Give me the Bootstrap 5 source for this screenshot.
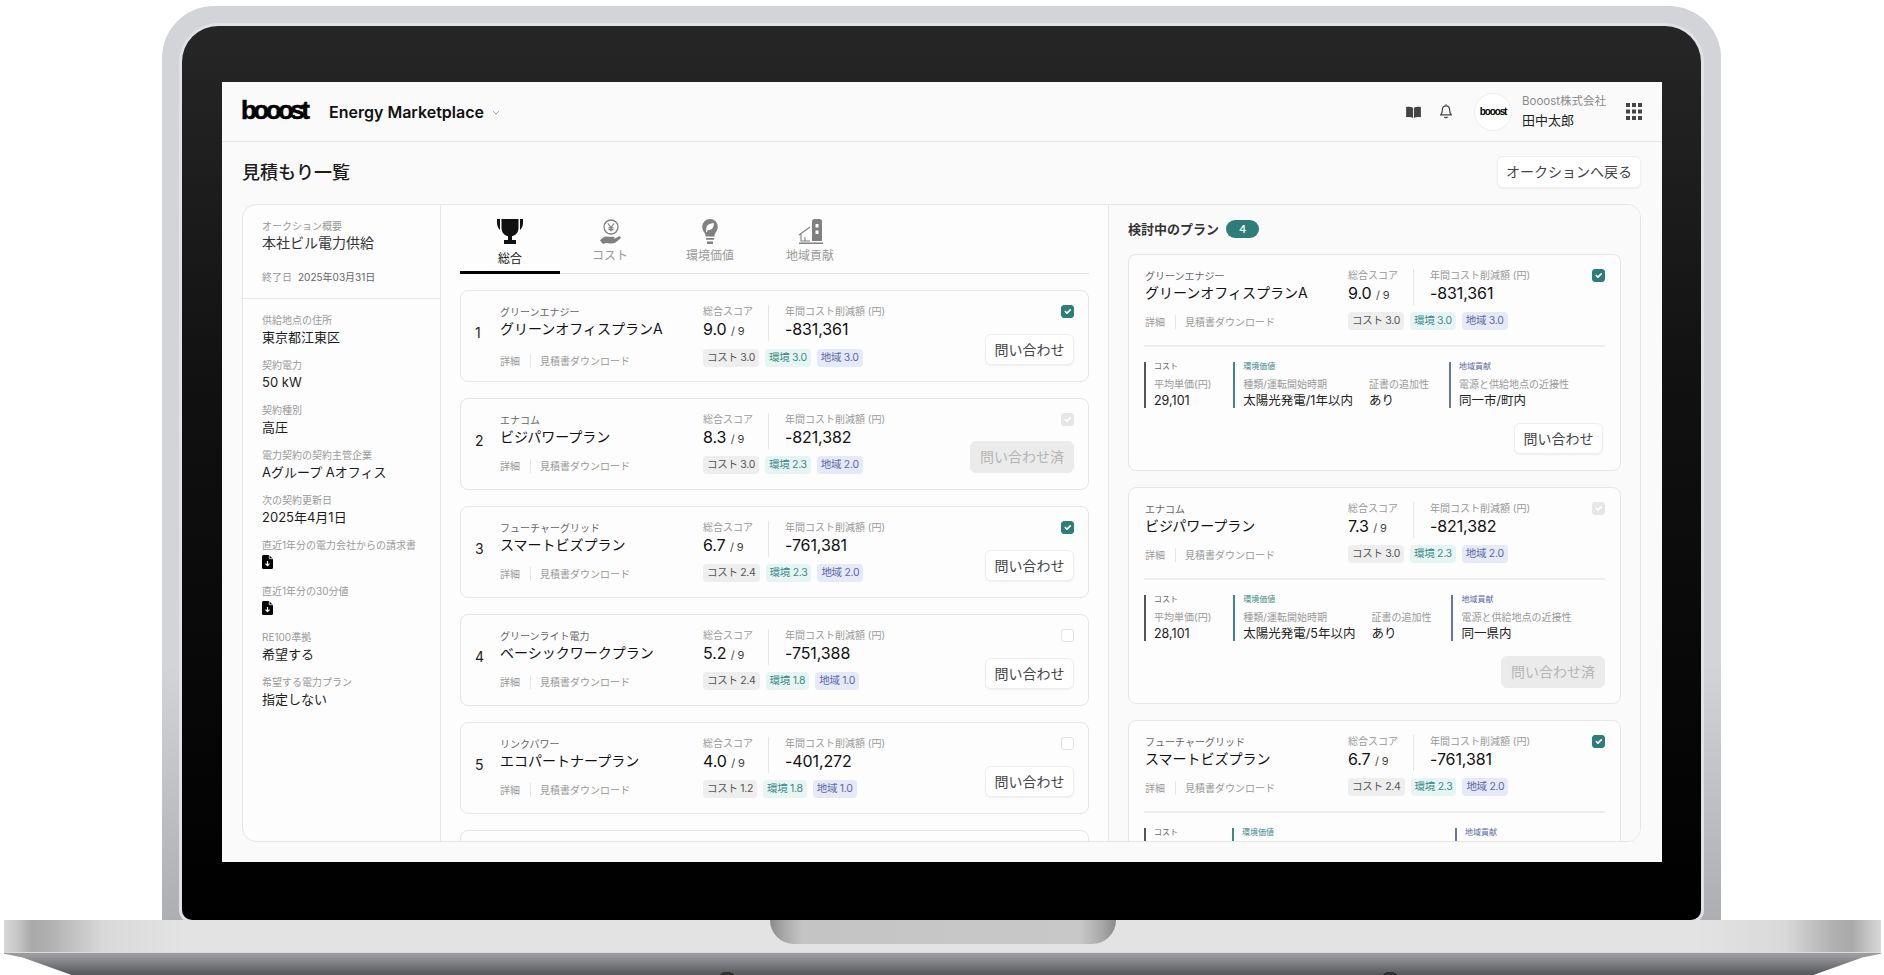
<!doctype html>
<html lang="ja">
<head>
<meta charset="utf-8">
<title>見積もり一覧</title>
<link href="https://cdn.jsdelivr.net/npm/bootstrap@5.3.0/dist/css/bootstrap.min.css" rel="stylesheet">
<style>
html,body{height:975px;overflow:hidden;background:#fff}
body{font-family:Inter,"Noto Sans CJK JP",sans-serif;color:#1c1c1c}
.lid{margin:6px 163px 0 162px;padding:20px 20px 0;height:914px;border-radius:52px 52px 0 0;background:linear-gradient(#d2d4d8 0,#d2d4d8 72%,#adaeb2 100%)}
.bezel{height:894px;padding:56px 39px 58px 40px;border-radius:36px 36px 10px 10px;background:linear-gradient(#262626 0,#111 40%,#000 100%);box-shadow:0 0 0 3px #e0e2e6}
.screen{height:780px;overflow:hidden;background:#fafafa}
.base-top{height:33px;background:linear-gradient(90deg,#d6d6d6 0,#c8c8c8 12px,#a9a9a9 28px,#b0b0b0 46px,#d9d9d9 100px,#e3e3e4 180px,#e3e3e4 1690px,#d9d9d9 1780px,#b0b0b0 1830px,#a9a9a9 1848px,#c8c8c8 1866px,#d6d6d6 100%);margin:0 3px 0 4px;border-bottom:1px solid #dcdcdc}
.notch{width:346px;height:24px;border-radius:0 0 24px 24px;background:linear-gradient(90deg,#8a8a8a 0,#a8a8a8 14px,#c4c4c4 32px,#c8c8c8 310px,#a8a8a8 332px,#8a8a8a 100%)}
.base-bottom{height:22px;margin:0 3px 0 4px;background:radial-gradient(ellipse 7px 3px at 723px 100%,#333 0 98%,transparent),radial-gradient(ellipse 7px 3px at 1386px 100%,#333 0 98%,transparent),linear-gradient(#9c9c9f 0,#98989b 15%,#6f7074 65%,#55575b 100%);clip-path:polygon(0 0,100% 0,100% 3%,99% 20%,96.400% 100%,3.600% 100%,1% 20%,0 3%)}
.top-bar{height:60px;padding:0 20px;border-bottom:1px solid #e6e6e6;background:#fafafa}
.logo-mark{font-family:"Liberation Sans",sans-serif;font-weight:700;font-size:26px;letter-spacing:-3.55px;line-height:1;color:#000;width:66px;margin:-4px 0 0 -1px;-webkit-text-stroke:.5px #000}
.app-name{font-size:16px;font-weight:600;margin-left:22px;color:#111}
.chev{margin-left:8px;margin-top:3px}
.bell-ico{margin-left:19px}
.ava{width:38px;height:38px;border-radius:50%;background:#fff;border:1px solid #eee;font-family:"Liberation Sans",sans-serif;font-weight:700;font-size:10px;letter-spacing:-1.1px;color:#000;margin-left:22px}
.who-box{margin-left:10px;width:84px}
.org{font-size:11.500px;line-height:16px;color:#8a8a8a;white-space:nowrap}
.who{font-size:13px;line-height:20px;color:#222;margin-top:1px}
.grid-ico{margin-left:20px}
.title-row{padding:14px 21px 0 20px;margin-bottom:16px}
.page-title{font-size:18px;font-weight:500;margin:2px 0 0;color:#1c1c1c}
.btn.ghost{--bs-btn-padding-x:8px;--bs-btn-padding-y:0;height:32px;font-size:14px;line-height:30px;color:#444;background:#fff;border:1px solid #eee;border-radius:6px;box-shadow:0 1px 2px rgba(0,0,0,.05)}
.btn.asked,.btn.asked:disabled{--bs-btn-padding-x:9px;height:32px;font-size:14px;line-height:30px;padding-top:0;padding-bottom:0;background:#ebebeb;color:#b5b5b5;border:1px solid #ebebeb;border-radius:6px;opacity:1}
.board{margin:0 21px 0 20px;height:638px;border:1px solid #e6e6e6;border-radius:14px;overflow:hidden;background:#fdfdfd}
.info-col{width:198px;flex:none;border-right:1px solid #e8e8e8}
.info-head{padding:14px 19px 13px;border-bottom:1px solid #e8e8e8}
.lbl{font-size:10px;line-height:14px;color:#999}
.info-title{font-size:14px;line-height:20px;color:#333}
.info-date{font-size:10px;line-height:16px;margin-top:16px;color:#999}
.info-date span{color:#666;margin-left:6px}
.info-list{padding:14px 19px}
.info-item{margin-bottom:11px}
.info-val{font-size:13px;line-height:20px;color:#1c1c1c}
.file-row{height:21px;padding-top:3px;line-height:0}
.mid-col{width:668px;flex:none;border-right:1px solid #e8e8e8;padding:0 19px;overflow:hidden}
.tabs{height:69px;border-bottom:1px solid #e3e3e3;margin-bottom:16px}
.tab-item{width:100px;height:69px;padding-top:14px;text-align:center;font-size:12px;line-height:16px;color:#9a9a9a}
.tab-item svg{display:block;margin:0 auto 4px}
.tab-item.on{color:#111;border-bottom:3px solid #000}
.tab-item.on svg{margin-bottom:7px}
.card.plan{--bs-card-bg:#fdfdfd;--bs-card-border-color:#e6e6e6;--bs-card-border-radius:8px;--bs-card-inner-border-radius:7px;margin-bottom:16px}
.mid-col .plan{height:92px;padding:14px 14px 16px;flex-direction:row}
.rank{width:25px;flex:none;font-size:14px;line-height:20px;color:#222;align-self:center;margin-top:-4px}
.plan-main{width:203px;flex:none}
.vendor{font-size:10px;line-height:14px;color:#666}
.plan-name{font-size:14px;line-height:20px;color:#111}
.plan-links{font-size:10px;line-height:14px;color:#999;margin-top:12px}
.plan-links i{display:inline-block;width:1px;height:14px;background:#e6e6e6;margin:0 9px 0 10px;vertical-align:top}
.mid-col .plan-top .plan-links{margin-top:15px}
.mid-col .plan-top .chips{margin-top:8px}
.num-a{width:66px;border-right:1px solid #e6e6e6}
.num-b{padding-left:16px}
.num-lbl{font-size:10px;line-height:12px;color:#999}
.num-val{font-size:16px;line-height:20px;margin-top:2px;color:#111;letter-spacing:-.1px}
.num-val small{font-size:11px;color:#444}
.chips{margin-top:7px;gap:6px}
.badge.chip{font-size:10.500px;font-weight:400;line-height:18px;height:18px;padding:0 4px;border-radius:4px;letter-spacing:-.3px}
.chip-c{background:#eee;color:#555}
.chip-e{background:#e6f5f3;color:#3d8a85}
.chip-r{background:#e6e9f7;color:#5b68a8}
.plan-side{margin-left:auto}
.form-check-input.pick{width:13px;height:13px;margin:0;border-radius:3px;border-color:#e3e3e3;background-color:#fff;flex:none}
.form-check-input.pick:checked{background-color:#2f7d78;border-color:#2f7d78}
.form-check-input.pick:disabled{opacity:1}
.form-check-input.pick:checked:disabled{background-color:#e6e6e6;border-color:#e6e6e6}
.btn.ask{--bs-btn-padding-x:8.500px;height:31px;padding-top:0;padding-bottom:0;font-size:14px;line-height:29px;color:#444;background:#fff;border:1px solid #eee;border-radius:6px;box-shadow:0 1px 2px rgba(0,0,0,.06)}
.side-col{flex:1;background:#fafafa;padding:14px 19px 0 19px;overflow:hidden}
.side-head{font-size:13px;line-height:20px;font-weight:600;color:#333;height:20px;margin-bottom:15px}
.badge.count{background:#2f7d78;color:#fff;font-size:11px;font-weight:500;line-height:18px;height:18px;padding:0 13px;border-radius:9px;margin-left:7px}
.side-col .plan{height:217px;padding:14px 15px 0 16px}
.plan-rule{height:2px;background:#ededed;margin:15px 0 15px -1px}
.facet{border-left:2px solid #555;padding-left:8px;height:46px}
.facet-e{border-left-color:#3d8a85}
.facet-r{border-left-color:#6673ad}
.facet-h{font-size:8px;line-height:8px;color:#666}
.facet-e .facet-h{color:#3d8a85}
.facet-r .facet-h{color:#5b68a8}
.facet-l{font-size:10px;line-height:14px;color:#999;margin-top:7px}
.facet-v{font-size:12.500px;line-height:18px;color:#222;margin-top:1px}
.facets{gap:20px;margin-left:-1px}
.facet:first-child{margin-right:2px}
.pair{gap:16px}
.cost-wide{width:56px}
.env-wide{width:193px}
.side-col .btn.ask{margin:15px 2px 0 0}
.side-col .btn.asked{margin:15px 0 0 0}
</style>
</head>
<body>
<div class="lid">
 <div class="bezel">
  <div class="screen">
   <header class="top-bar d-flex align-items-center">
    <div class="logo-mark">booost</div>
    <div class="app-name">Energy Marketplace</div>
    <svg class="chev" width="8" height="6" viewBox="0 0 8 6" fill="none" stroke="#aaa" stroke-width="1"><path d="M1 1l3 3 3-3"/></svg>
    <div class="d-flex align-items-center ms-auto">
     <svg width="15" height="12" viewBox="0 0 16 13" fill="#444"><path d="M0 1.200C2.300.500 5.500.500 7.500 1.800V13C5.500 11.800 2.300 11.600 0 12.200zM16 1.200C13.700.500 10.500.500 8.500 1.800V13C10.500 11.800 13.700 11.600 16 12.200z"/></svg>
     <svg class="bell-ico" width="12" height="15" viewBox="0 0 12 15" fill="none" stroke="#444" stroke-width="1.200"><path d="M6 1.800c-2.500 0-3.600 1.900-3.600 4 0 2.600-.7 3.900-1.600 5h10.400c-.9-1.100-1.600-2.400-1.600-5 0-2.100-1.100-4-3.600-4zM6 .3v1.500M4.500 12.700c.4 1.300 2.600 1.300 3 0"/></svg>
     <div class="ava d-flex align-items-center justify-content-center">booost</div>
     <div class="who-box">
      <div class="org">Booost株式会社</div>
      <div class="who">田中太郎</div>
     </div>
     <svg class="grid-ico" width="16" height="17" viewBox="0 0 16 17" fill="#444"><path d="M0 0h4v4H0zM6 0h4v4H6zM12 0h4v4h-4zM0 6.500h4v4H0zM6 6.500h4v4H6zM12 6.500h4v4h-4zM0 13h4v4H0zM6 13h4v4H6zM12 13h4v4h-4z"/></svg>
    </div>
   </header>
   <div class="title-row d-flex align-items-center justify-content-between">
    <h1 class="page-title">見積もり一覧</h1>
    <button type="button" class="btn ghost">オークションへ戻る</button>
   </div>
   <div class="board d-flex">
    <aside class="info-col">
     <div class="info-head">
      <div class="lbl">オークション概要</div>
      <div class="info-title">本社ビル電力供給</div>
      <div class="info-date">終了日<span>2025年03月31日</span></div>
     </div>
     <div class="info-list">
      <div class="info-item"><div class="lbl">供給地点の住所</div><div class="info-val">東京都江東区</div></div>
      <div class="info-item"><div class="lbl">契約電力</div><div class="info-val">50 kW</div></div>
      <div class="info-item"><div class="lbl">契約種別</div><div class="info-val">高圧</div></div>
      <div class="info-item"><div class="lbl">電力契約の契約主管企業</div><div class="info-val">Aグループ Aオフィス</div></div>
      <div class="info-item"><div class="lbl">次の契約更新日</div><div class="info-val">2025年4月1日</div></div>
      <div class="info-item"><div class="lbl">直近1年分の電力会社からの請求書</div><div class="file-row"><svg width="11" height="14" viewBox="0 0 11 14"><path d="M1.500 0H7l4 4v8.500A1.500 1.500 0 0 1 9.500 14h-8A1.500 1.500 0 0 1 0 12.500v-11A1.500 1.500 0 0 1 1.500 0z" fill="#000"/><path d="M5.500 6v4.500M3.500 8.700l2 2 2-2" stroke="#fff" fill="none" stroke-width="1.200"/><path d="M7.300 0v3.700H11" fill="none" stroke="#fff" stroke-width=".8"/></svg></div></div>
      <div class="info-item"><div class="lbl">直近1年分の30分値</div><div class="file-row"><svg width="11" height="14" viewBox="0 0 11 14"><path d="M1.500 0H7l4 4v8.500A1.500 1.500 0 0 1 9.500 14h-8A1.500 1.500 0 0 1 0 12.500v-11A1.500 1.500 0 0 1 1.500 0z" fill="#000"/><path d="M5.500 6v4.500M3.500 8.700l2 2 2-2" stroke="#fff" fill="none" stroke-width="1.200"/><path d="M7.300 0v3.700H11" fill="none" stroke="#fff" stroke-width=".8"/></svg></div></div>
      <div class="info-item"><div class="lbl">RE100準拠</div><div class="info-val">希望する</div></div>
      <div class="info-item"><div class="lbl">希望する電力プラン</div><div class="info-val">指定しない</div></div>
     </div>
    </aside>
    <main class="mid-col">
     <div class="tabs d-flex">
      <div class="tab-item on">
       <svg width="26" height="25" viewBox="0 0 26 25" fill="#111"><path d="M0 0h3v11C1 9 0 6.500 0 4zM26 0h-3v11c2-2 3-4.500 3-7zM4.500 0h17v9c0 4.500-3 7.500-6.500 8.200V21h4v4H7v-4h4v-3.800C7.500 16.500 4.500 13.500 4.500 9z"/></svg>
       総合
      </div>
      <div class="tab-item">
       <svg width="26" height="25" viewBox="0 0 26 25"><circle cx="14" cy="8" r="7" fill="none" stroke="#808080" stroke-width="1.300"/><path d="M11 4.500l3 4 3-4M14 8.500V12.500M11.500 8.800h5M11.500 10.600h5" fill="none" stroke="#808080" stroke-width="1.200"/><path d="M3 21.500c2.500-3 5-4.500 8-3.800h5.500c1.400 0 1.600 2-.3 2.300h-3.500 4l5-2.500c1.800-.6 2.700 1 1.500 2.200l-4.700 3.800c-2 1.200-6.300 1.300-9.500.6L6 25z" fill="#808080"/></svg>
       コスト
      </div>
      <div class="tab-item">
       <svg width="26" height="25" viewBox="0 0 26 25"><path d="M13 0a7.800 7.800 0 0 0-7.800 7.800c0 3.500 2 5 3 7.500l.5 2.200h8.600l.5-2.200c1-2.500 3-4 3-7.500A7.800 7.800 0 0 0 13 0z" fill="#808080"/><path d="M9.300 10C9 7 11.500 4.300 16.800 4C17 9 14.500 11.500 11 11l-1.300 2.300-.7-.4z" fill="#fff"/><path d="M9 19h8v1.700H9zM10 22.500h6V25h-6z" fill="#808080"/></svg>
       環境価値
      </div>
      <div class="tab-item">
       <svg width="26" height="25" viewBox="0 0 26 25"><path d="M15 3c0-1.700 1-3 2.500-3h5c1.500 0 2.500 1 2.500 2.500V22H15z" fill="#808080"/><path d="M18.500 5h3v3.500h-3zM18.500 11.500h3V15h-3z" fill="#fff"/><path d="M2 16l11-8M4 14.500V22h9M8 22v-4" fill="none" stroke="#808080" stroke-width="1.100"/><path d="M2 23.500h24V25H2z" fill="#808080"/></svg>
       地域貢献
      </div>
     </div>

     <div class="card plan plan-top">
      <div class="rank">1</div>
      <div class="plan-main"><div class="vendor">グリーンエナジー</div><div class="plan-name">グリーンオフィスプランA</div><div class="plan-links">詳細<i></i>見積書ダウンロード</div></div>
      <div><div class="d-flex"><div class="num-a"><div class="num-lbl">総合スコア</div><div class="num-val">9.0 <small>/ 9</small></div></div><div class="num-b"><div class="num-lbl">年間コスト削減額 (円)</div><div class="num-val">-831,361</div></div></div>
      <div class="chips d-flex"><span class="badge chip chip-c">コスト 3.0</span><span class="badge chip chip-e">環境 3.0</span><span class="badge chip chip-r">地域 3.0</span></div></div>
      <div class="plan-side d-flex flex-column align-items-end justify-content-between"><input class="form-check-input pick" type="checkbox" checked aria-label="検討"><button type="button" class="btn ask">問い合わせ</button></div>
     </div>

     <div class="card plan">
      <div class="rank">2</div>
      <div class="plan-main"><div class="vendor">エナコム</div><div class="plan-name">ビジパワープラン</div><div class="plan-links">詳細<i></i>見積書ダウンロード</div></div>
      <div><div class="d-flex"><div class="num-a"><div class="num-lbl">総合スコア</div><div class="num-val">8.3 <small>/ 9</small></div></div><div class="num-b"><div class="num-lbl">年間コスト削減額 (円)</div><div class="num-val">-821,382</div></div></div>
      <div class="chips d-flex"><span class="badge chip chip-c">コスト 3.0</span><span class="badge chip chip-e">環境 2.3</span><span class="badge chip chip-r">地域 2.0</span></div></div>
      <div class="plan-side d-flex flex-column align-items-end justify-content-between"><input class="form-check-input pick" type="checkbox" checked disabled aria-label="検討"><button type="button" class="btn asked" disabled>問い合わせ済</button></div>
     </div>

     <div class="card plan">
      <div class="rank">3</div>
      <div class="plan-main"><div class="vendor">フューチャーグリッド</div><div class="plan-name">スマートビズプラン</div><div class="plan-links">詳細<i></i>見積書ダウンロード</div></div>
      <div><div class="d-flex"><div class="num-a"><div class="num-lbl">総合スコア</div><div class="num-val">6.7 <small>/ 9</small></div></div><div class="num-b"><div class="num-lbl">年間コスト削減額 (円)</div><div class="num-val">-761,381</div></div></div>
      <div class="chips d-flex"><span class="badge chip chip-c">コスト 2.4</span><span class="badge chip chip-e">環境 2.3</span><span class="badge chip chip-r">地域 2.0</span></div></div>
      <div class="plan-side d-flex flex-column align-items-end justify-content-between"><input class="form-check-input pick" type="checkbox" checked aria-label="検討"><button type="button" class="btn ask">問い合わせ</button></div>
     </div>

     <div class="card plan">
      <div class="rank">4</div>
      <div class="plan-main"><div class="vendor">グリーンライト電力</div><div class="plan-name">ベーシックワークプラン</div><div class="plan-links">詳細<i></i>見積書ダウンロード</div></div>
      <div><div class="d-flex"><div class="num-a"><div class="num-lbl">総合スコア</div><div class="num-val">5.2 <small>/ 9</small></div></div><div class="num-b"><div class="num-lbl">年間コスト削減額 (円)</div><div class="num-val">-751,388</div></div></div>
      <div class="chips d-flex"><span class="badge chip chip-c">コスト 2.4</span><span class="badge chip chip-e">環境 1.8</span><span class="badge chip chip-r">地域 1.0</span></div></div>
      <div class="plan-side d-flex flex-column align-items-end justify-content-between"><input class="form-check-input pick" type="checkbox" aria-label="検討"><button type="button" class="btn ask">問い合わせ</button></div>
     </div>

     <div class="card plan">
      <div class="rank">5</div>
      <div class="plan-main"><div class="vendor">リンクパワー</div><div class="plan-name">エコパートナープラン</div><div class="plan-links">詳細<i></i>見積書ダウンロード</div></div>
      <div><div class="d-flex"><div class="num-a"><div class="num-lbl">総合スコア</div><div class="num-val">4.0 <small>/ 9</small></div></div><div class="num-b"><div class="num-lbl">年間コスト削減額 (円)</div><div class="num-val">-401,272</div></div></div>
      <div class="chips d-flex"><span class="badge chip chip-c">コスト 1.2</span><span class="badge chip chip-e">環境 1.8</span><span class="badge chip chip-r">地域 1.0</span></div></div>
      <div class="plan-side d-flex flex-column align-items-end justify-content-between"><input class="form-check-input pick" type="checkbox" aria-label="検討"><button type="button" class="btn ask">問い合わせ</button></div>
     </div>

     <div class="card plan"></div>
    </main>
    <section class="side-col">
     <div class="side-head d-flex align-items-center">検討中のプラン<span class="badge count">4</span></div>

     <div class="card plan">
      <div class="d-flex">
       <div class="plan-main"><div class="vendor">グリーンエナジー</div><div class="plan-name">グリーンオフィスプランA</div><div class="plan-links">詳細<i></i>見積書ダウンロード</div></div>
       <div><div class="d-flex"><div class="num-a"><div class="num-lbl">総合スコア</div><div class="num-val">9.0 <small>/ 9</small></div></div><div class="num-b"><div class="num-lbl">年間コスト削減額 (円)</div><div class="num-val">-831,361</div></div></div>
       <div class="chips d-flex"><span class="badge chip chip-c">コスト 3.0</span><span class="badge chip chip-e">環境 3.0</span><span class="badge chip chip-r">地域 3.0</span></div></div>
       <div class="plan-side"><input class="form-check-input pick d-block" type="checkbox" checked aria-label="検討"></div>
      </div>
      <div class="plan-rule"></div>
      <div class="facets d-flex">
       <div class="facet"><div class="facet-h">コスト</div><div class="facet-l">平均単価(円)</div><div class="facet-v">29,101</div></div>
       <div class="facet facet-e"><div class="facet-h">環境価値</div><div class="pair d-flex"><div><div class="facet-l">種類/運転開始時期</div><div class="facet-v">太陽光発電/1年以内</div></div><div><div class="facet-l">証書の追加性</div><div class="facet-v">あり</div></div></div></div>
       <div class="facet facet-r"><div class="facet-h">地域貢献</div><div class="facet-l">電源と供給地点の近接性</div><div class="facet-v">同一市/町内</div></div>
      </div>
      <div class="text-end"><button type="button" class="btn ask">問い合わせ</button></div>
     </div>

     <div class="card plan">
      <div class="d-flex">
       <div class="plan-main"><div class="vendor">エナコム</div><div class="plan-name">ビジパワープラン</div><div class="plan-links">詳細<i></i>見積書ダウンロード</div></div>
       <div><div class="d-flex"><div class="num-a"><div class="num-lbl">総合スコア</div><div class="num-val">7.3 <small>/ 9</small></div></div><div class="num-b"><div class="num-lbl">年間コスト削減額 (円)</div><div class="num-val">-821,382</div></div></div>
       <div class="chips d-flex"><span class="badge chip chip-c">コスト 3.0</span><span class="badge chip chip-e">環境 2.3</span><span class="badge chip chip-r">地域 2.0</span></div></div>
       <div class="plan-side"><input class="form-check-input pick d-block" type="checkbox" checked disabled aria-label="検討"></div>
      </div>
      <div class="plan-rule"></div>
      <div class="facets d-flex">
       <div class="facet"><div class="facet-h">コスト</div><div class="facet-l">平均単価(円)</div><div class="facet-v">28,101</div></div>
       <div class="facet facet-e"><div class="facet-h">環境価値</div><div class="pair d-flex"><div><div class="facet-l">種類/運転開始時期</div><div class="facet-v">太陽光発電/5年以内</div></div><div><div class="facet-l">証書の追加性</div><div class="facet-v">あり</div></div></div></div>
       <div class="facet facet-r"><div class="facet-h">地域貢献</div><div class="facet-l">電源と供給地点の近接性</div><div class="facet-v">同一県内</div></div>
      </div>
      <div class="text-end"><button type="button" class="btn asked" disabled>問い合わせ済</button></div>
     </div>

     <div class="card plan">
      <div class="d-flex">
       <div class="plan-main"><div class="vendor">フューチャーグリッド</div><div class="plan-name">スマートビズプラン</div><div class="plan-links">詳細<i></i>見積書ダウンロード</div></div>
       <div><div class="d-flex"><div class="num-a"><div class="num-lbl">総合スコア</div><div class="num-val">6.7 <small>/ 9</small></div></div><div class="num-b"><div class="num-lbl">年間コスト削減額 (円)</div><div class="num-val">-761,381</div></div></div>
       <div class="chips d-flex"><span class="badge chip chip-c">コスト 2.4</span><span class="badge chip chip-e">環境 2.3</span><span class="badge chip chip-r">地域 2.0</span></div></div>
       <div class="plan-side"><input class="form-check-input pick d-block" type="checkbox" checked aria-label="検討"></div>
      </div>
      <div class="plan-rule"></div>
      <div class="facets d-flex">
       <div class="facet"><div class="facet-h cost-wide">コスト</div></div>
       <div class="facet facet-e"><div class="facet-h env-wide">環境価値</div></div>
       <div class="facet facet-r"><div class="facet-h">地域貢献</div></div>
      </div>
     </div>
    </section>
   </div>
  </div>
 </div>
</div>
<div class="base-top d-flex justify-content-center"><div class="notch"></div></div>
<div class="base-bottom"></div>
<script src="https://cdn.jsdelivr.net/npm/bootstrap@5.3.0/dist/js/bootstrap.bundle.min.js"></script>
</body>
</html>
